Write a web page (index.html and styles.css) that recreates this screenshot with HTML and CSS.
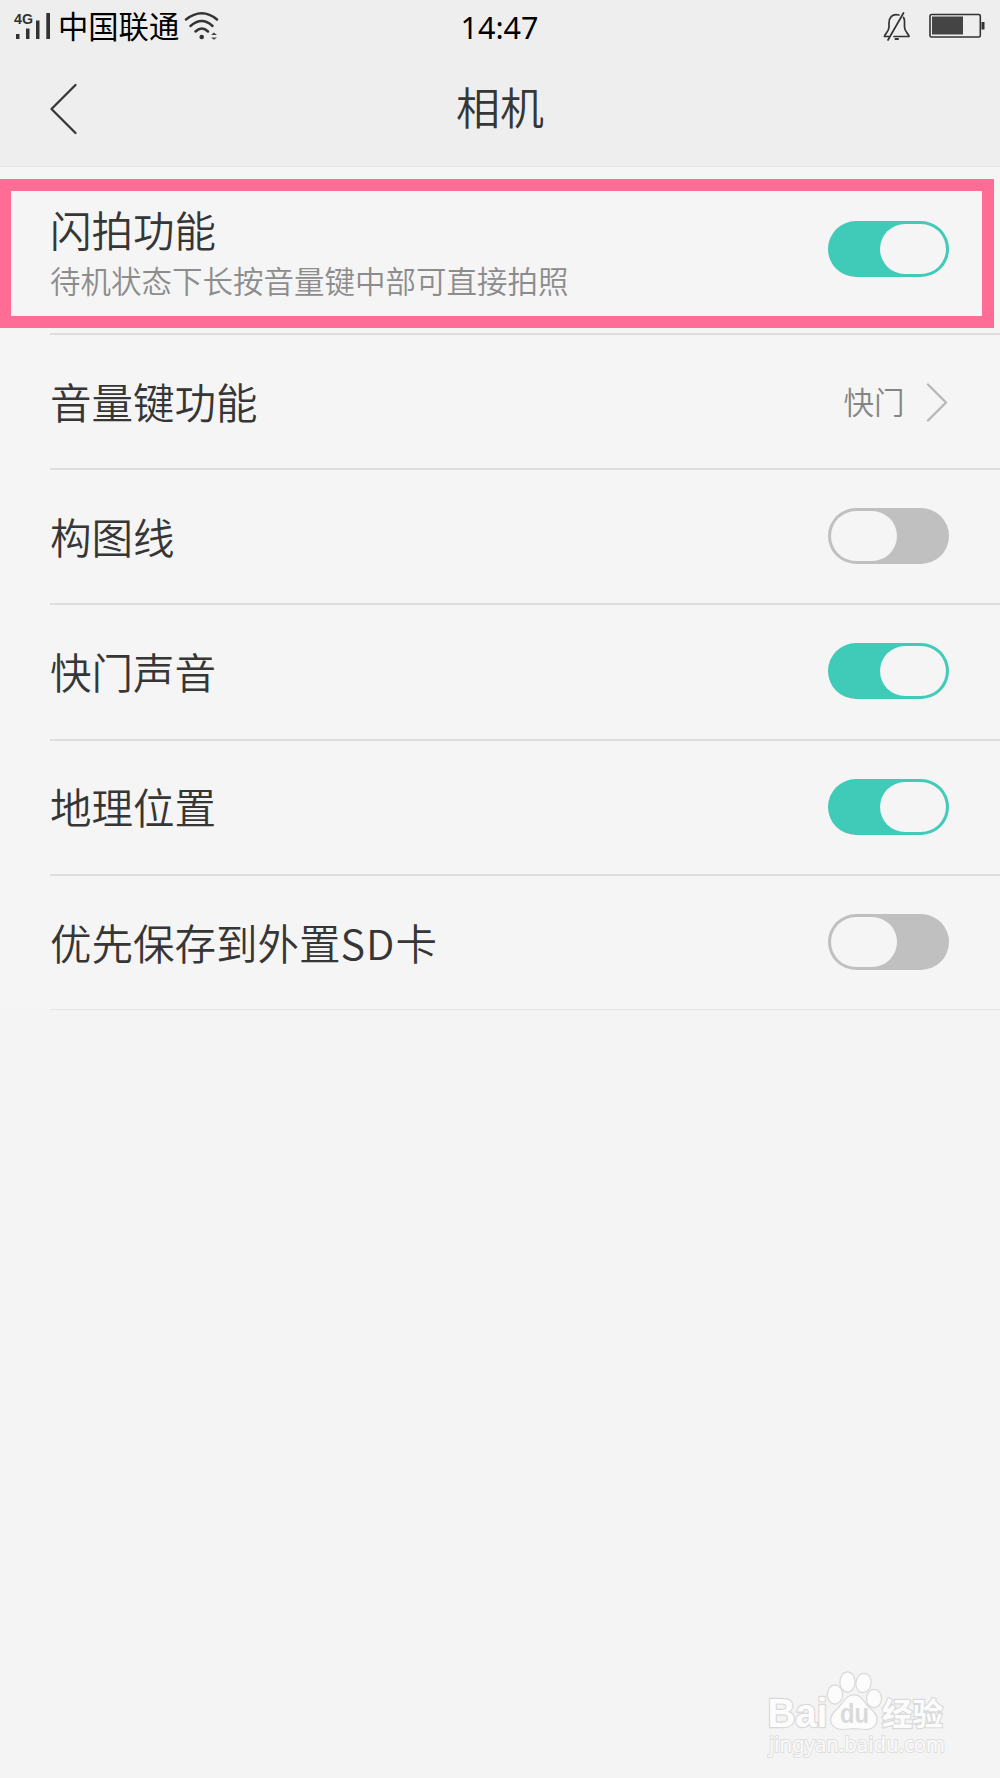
FILE: index.html
```html
<!DOCTYPE html>
<html lang="zh-CN">
<head>
<meta charset="utf-8">
<title>相机</title>
<link rel="stylesheet" href="styles.css">
</head>
<body>
<div class="screen">
  <header class="header">
    <div class="status">
      <div class="status-left">
        <svg class="signal" width="38" height="30" viewBox="0 0 38 30">
          <text class="network" x="0" y="12.500" textLength="19" lengthAdjust="spacingAndGlyphs">4G</text>
          <rect x="2" y="23" width="3.5" height="5"/>
          <rect x="12" y="17.500" width="3.500" height="10.500"/>
          <rect x="22" y="9.500" width="3.500" height="18.500"/>
          <rect x="32.300" y="2" width="3.700" height="26"/>
        </svg>
        <span class="carrier">中国联通</span>
        <svg class="wifi" width="36" height="30" viewBox="0 0 36 30">
          <g fill="none" stroke="#333" stroke-width="2.500" stroke-linecap="round">
            <path d="M2 8.500Q18 -4 33 8.500"/>
            <path d="M6.500 15Q18 5 28.500 15"/>
            <path d="M11.500 20.500Q18 14.500 24 20.500"/>
          </g>
          <circle cx="17.700" cy="26" r="2.300" fill="#333"/>
          <path d="M27 24L30 21.500L33 24ZM27 26.500H33L30 28.700Z" fill="#444"/>
        </svg>
      </div>
      <time class="clock">14:47</time>
      <div class="status-right">
        <svg width="28" height="30" viewBox="0 0 28 30" fill="none" stroke="#333" stroke-width="1.700" stroke-linecap="round" stroke-linejoin="round">
          <path d="M16 4C9 2 6 7 6 12V16C6 21 1.500 23 1.500 25.500H6M11 25.500H26C26 23 21.500 21 21.500 16V10Q21.500 8 20.500 6.500"/>
          <path d="M5 29L20.500 2"/>
          <path d="M12.500 28H15" stroke-width="2"/>
        </svg>
        <svg class="battery" width="56" height="26" viewBox="0 0 56 26">
          <rect x="1" y="1.500" width="50.300" height="22.500" rx="1.500" fill="none" stroke="#333" stroke-width="1.600"/>
          <rect x="3" y="3.500" width="31" height="18" fill="#444"/>
          <rect x="52.500" y="9" width="3" height="7.500" fill="#333"/>
        </svg>
      </div>
    </div>
    <div class="nav">
      <svg class="back" width="30" height="54" viewBox="0 0 30 54"><path d="M27.500 3L3.500 27L27.500 51" fill="none" stroke="#363636" stroke-width="2.300" stroke-linecap="round" stroke-linejoin="round"/></svg>
      <h1 class="title">相机</h1>
    </div>
  </header>
  <main class="list">
    <section class="row row-tall">
      <div class="labels"><span class="label">闪拍功能</span><span class="hint">待机状态下长按音量键中部可直接拍照</span></div>
      <span class="switch on"><i class="knob"></i></span>
      <div class="highlight"></div>
    </section>
    <section class="row">
      <span class="label">音量键功能</span>
      <span class="value"><span class="choice">快门</span>
        <svg width="22" height="40" viewBox="0 0 22 40"><path d="M2 2.500L20 20.500L2 38.500" fill="none" stroke="#b8b8b8" stroke-width="2.400" stroke-linecap="round" stroke-linejoin="round"/></svg>
      </span>
    </section>
    <section class="row"><span class="label">构图线</span><span class="switch"><i class="knob"></i></span></section>
    <section class="row"><span class="label">快门声音</span><span class="switch on"><i class="knob"></i></span></section>
    <section class="row"><span class="label">地理位置</span><span class="switch on"><i class="knob"></i></span></section>
    <section class="row"><span class="label">优先保存到外置<span class="card">SD</span>卡</span><span class="switch"><i class="knob"></i></span></section>
  </main>
  <svg class="watermark" width="190" height="92" viewBox="0 0 190 92">
    <g class="mark">
      <text class="latin" x="5.500" y="56" textLength="60" lengthAdjust="spacingAndGlyphs">Bai</text>
      <ellipse cx="73" cy="23.500" rx="7" ry="9"/>
      <ellipse cx="85.500" cy="11" rx="7" ry="9.500"/>
      <ellipse cx="101.500" cy="12" rx="7" ry="9" transform="rotate(10 101.500 12)"/>
      <ellipse cx="112" cy="27.500" rx="7" ry="8.500"/>
      <path d="M92 24.500C84 24.500 82 32 76 38C69 44 67 50 72 55C77 60 86 57 92 57C98 57 107 60 112 55C117 49 114 43 108 38C101 32 100 24.500 92 24.500Z"/>
      <text class="han" x="120" y="54" textLength="61" lengthAdjust="spacingAndGlyphs">经验</text>
    </g>
    <text class="du" x="78" y="52" textLength="29" lengthAdjust="spacingAndGlyphs">du</text>
    <text class="url" x="7" y="80.500" textLength="176" lengthAdjust="spacingAndGlyphs">jingyan.baidu.com</text>
  </svg>
</div>
</body>
</html>
```
FILE: styles.css
```css
* { box-sizing: border-box; }

body {
  margin: 0;
  background: #f4f4f4;
  font-family: "Noto Sans CJK SC", sans-serif;
  font-weight: 350;
  color: #363636;
}

.screen {
  display: flex;
  flex-direction: column;
  width: 1000px;
  height: 1778px;
  overflow: hidden;
}

.header {
  height: 167px;
  background: #eee;
  border-bottom: 1px solid #e4e6e6;
}

.status {
  display: grid;
  grid-template-columns: 1fr auto 1fr;
  align-items: center;
  height: 50px;
  padding: 0 15px 0 14px;
}

.status-left,
.status-right {
  display: flex;
  align-items: center;
}

.status-right {
  justify-content: flex-end;
  gap: 18px;
}

.status-right svg { margin-bottom: 1px; }

.status-left svg { margin-bottom: 1px; }

.signal { fill: #333; }

.network {
  font: bold 14px "Liberation Sans", sans-serif;
}

.carrier {
  margin-left: 6px;
  padding-bottom: 2px;
  font-size: 30.3px;
  font-weight: 400;
  line-height: 46px;
  color: #000;
}

.wifi { margin-left: 5px; }

.clock {
  padding-top: 2px;
  font: 400 30.5px/50px "Noto Sans", sans-serif;
  color: #000;
}

.nav {
  display: grid;
  grid-template-columns: 1fr auto 1fr;
  align-items: center;
  height: 116px;
}

.back { margin: 1px 0 0 47.500px; }

.title {
  margin: 0;
  padding-bottom: 5px;
  font-size: 44px;
  font-weight: 350;
  line-height: 60px;
}

.list {
  padding-left: 50px;
  background: #f5f5f5;
}

.row {
  display: flex;
  align-items: center;
  justify-content: space-between;
  height: 135.2px;
  padding-right: 51.5px;
  border-bottom: 2px solid #dedede;
}

.row > .label,
.choice { padding-bottom: 2px; }

.row:last-child {
  height: 134.7px;
  border-bottom: 1px solid #e4e4e4;
}

.row-tall {
  position: relative;
  height: 168px;
}

.row-tall .switch { margin-bottom: 2px; }

.labels {
  display: flex;
  flex-direction: column;
  gap: 3px;
  padding-top: 4px;
}

.label {
  font-size: 41.5px;
  line-height: 52px;
}

.card { letter-spacing: 1px; }

.hint {
  font-size: 30.5px;
  line-height: 44px;
  color: #8c8c8c;
}

.value {
  display: flex;
  align-items: center;
  gap: 21px;
  margin-right: 1px;
  font-size: 30.5px;
  color: #858585;
}

.switch {
  display: flex;
  width: 120.5px;
  height: 56px;
  padding: 3px;
  border-radius: 28px;
  background: #c0c0c0;
}

.row:not(.row-tall) .switch { margin-bottom: 1px; }

.knob {
  width: 66px;
  height: 50px;
  border-radius: 25px;
  background: #f5f5f5;
}

.on {
  justify-content: flex-end;
  background: #40cab8;
}

.highlight {
  position: absolute;
  left: -51px;
  top: 12px;
  width: 994.5px;
  height: 149px;
  border: 12px solid #ff6c96;
}

.watermark {
  margin: auto 0 15px 762px;
}

.mark {
  fill: #fcfcfc;
  stroke: #d9d9d9;
  stroke-width: 2.4px;
  paint-order: stroke;
}

.latin { font: bold 40px "Liberation Sans", sans-serif; }

.han { font: bold 31px "Noto Sans CJK SC", sans-serif; }

.du {
  font: bold 27px "Liberation Sans", sans-serif;
  fill: #dadada;
}

.url {
  font: 400 22px "Noto Sans", sans-serif;
  fill: #fafafa;
  stroke: #dfdfdf;
  stroke-width: 2px;
  paint-order: stroke;
}
```
